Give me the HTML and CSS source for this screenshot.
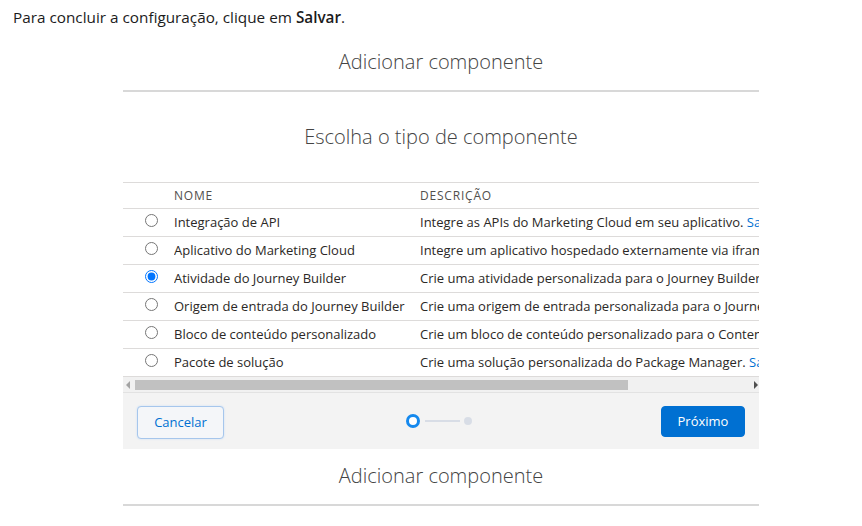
FILE: index.html
```html
<!DOCTYPE html>
<html lang="pt-BR">
<head>
<meta charset="utf-8">
<title>Adicionar componente</title>
<link rel="stylesheet" href="styles.css">
</head>
<body>
<p class="intro">Para concluir a configuração, clique em <b>Salvar</b>.</p>
<div class="panel">
  <h2 class="title">Adicionar componente</h2>
  <h3 class="subtitle">Escolha o tipo de componente</h3>
  <div class="table-wrap">
    <table class="grid">
      <colgroup>
        <col class="col-radio">
        <col class="col-name">
        <col class="col-desc">
      </colgroup>
      <thead>
        <tr><th></th><th>Nome</th><th>Descrição</th></tr>
      </thead>
      <tbody>
        <tr><td class="c-radio"><input type="radio" name="t"></td><td>Integração de API</td><td>Integre as APIs do Marketing Cloud em seu aplicativo. <a href="#">Saiba mais</a></td></tr>
        <tr><td class="c-radio"><input type="radio" name="t"></td><td>Aplicativo do Marketing Cloud</td><td>Integre um aplicativo hospedado externamente via iframe. <a href="#">Saiba mais</a></td></tr>
        <tr><td class="c-radio"><input type="radio" name="t" checked></td><td>Atividade do Journey Builder</td><td>Crie uma atividade personalizada para o Journey Builder. <a href="#">Saiba mais</a></td></tr>
        <tr><td class="c-radio"><input type="radio" name="t"></td><td>Origem de entrada do Journey Builder</td><td>Crie uma origem de entrada personalizada para o Journey Builder. <a href="#">Saiba mais</a></td></tr>
        <tr><td class="c-radio"><input type="radio" name="t"></td><td>Bloco de conteúdo personalizado</td><td>Crie um bloco de conteúdo personalizado para o Content Builder. <a href="#">Saiba mais</a></td></tr>
        <tr><td class="c-radio"><input type="radio" name="t"></td><td>Pacote de solução</td><td>Crie uma solução personalizada do Package Manager. <a href="#">Saiba mais</a></td></tr>
      </tbody>
    </table>
  </div>
  <div class="hscroll">
    <span class="arrow arrow-left"></span>
    <span class="thumb"></span>
    <span class="arrow arrow-right"></span>
  </div>
  <div class="footer">
    <div class="f-left"><button class="btn btn-neutral">Cancelar</button></div>
    <div class="progress">
      <span class="step step-active"></span>
      <span class="step-line"></span>
      <span class="step step-todo"></span>
    </div>
    <div class="f-right"><button class="btn btn-brand">Próximo</button></div>
  </div>
  <h2 class="title title-bottom">Adicionar componente</h2>
</div>
</body>
</html>
```
FILE: styles.css
```css
html, body {
  margin: 0;
  padding: 0;
  background: #ffffff;
}
body {
  font-family: "Open Sans", "Liberation Sans", sans-serif;
  color: #3e3e3c;
}
.intro {
  margin: 0;
  padding: 7px 13px 9px;
  height: 20px;
  font-family: "Open Sans", "Liberation Sans", sans-serif;
  font-size: 15.3px;
  line-height: 20px;
  color: #1b1b1b;
}
.intro b {
  font-weight: 600;
}
.panel {
  margin-left: 123px;
  width: 636px;
}
.title {
  margin: 0;
  padding: 12px 0 14px;
  line-height: 28px;
  font-size: 20px;
  font-weight: 300;
  text-align: center;
  color: #444444;
  border-bottom: 2px solid #d8d8d8;
}
.subtitle {
  margin: 0;
  padding: 31px 0 31px;
  line-height: 28px;
  font-size: 20px;
  font-weight: 300;
  text-align: center;
  color: #444444;
}
.table-wrap {
  width: 636px;
  overflow: hidden;
}
.grid {
  table-layout: fixed;
  width: 900px;
  border-collapse: collapse;
  border-top: 1px solid #dddbda;
  white-space: nowrap;
  font-size: 13px;
  color: #2b2826;
}
.col-radio {
  width: 51px;
}
.col-name {
  width: 246px;
}
.col-desc {
  width: 603px;
}
.grid th {
  height: 25px;
  padding: 0;
  text-align: left;
  font-size: 12px;
  font-weight: 400;
  letter-spacing: 0.8px;
  text-transform: uppercase;
  color: #514f4d;
  border-bottom: 1px solid #dddbda;
}
.grid td {
  height: 25px;
  padding: 0 0 2px;
  overflow: hidden;
  border-bottom: 1px solid #dddbda;
}
.grid td.c-radio {
  text-align: center;
  padding-bottom: 4px;
  height: 23px;
}
.grid td.c-radio input {
  margin: 0 0 0 5px;
  width: 13px;
  height: 13px;
  vertical-align: -1px;
}
.grid a {
  color: #0070d2;
  text-decoration: none;
}
.hscroll {
  display: flex;
  align-items: center;
  height: 15px;
  background: #f1f1f1;
  border-bottom: 1px solid #e2e2e2;
}
.arrow {
  width: 0;
  height: 0;
  border-top: 4px solid transparent;
  border-bottom: 4px solid transparent;
}
.arrow-left {
  margin: 0 5px 0 3px;
  border-right: 4px solid #a3a3a3;
}
.thumb {
  width: 493px;
  height: 10px;
  background: #c1c1c1;
}
.arrow-right {
  margin-left: auto;
  margin-right: 1px;
  border-left: 4px solid #505050;
}
.footer {
  display: grid;
  grid-template-columns: 1fr auto 1fr;
  align-items: center;
  height: 56px;
  padding: 0 14px;
  background: #f3f3f3;
}
.f-right {
  text-align: right;
}
.btn {
  font-family: "Open Sans", "Liberation Sans", sans-serif;
  font-size: 13px;
  border-radius: 4px;
  cursor: pointer;
}
.btn-neutral {
  width: 87px;
  height: 33px;
  margin-top: 2px;
  background: #f4f6f9;
  color: #0070d2;
  border: 1px solid #a6c6ec;
  box-shadow: 0 0 2px #c4dbf5;
}
.btn-brand {
  width: 84px;
  height: 31px;
  background: #0070d2;
  color: #ffffff;
  border: 1px solid #0070d2;
}
.progress {
  display: flex;
  align-items: center;
  margin-right: 4px;
}
.step {
  border-radius: 50%;
  box-sizing: border-box;
}
.step-active {
  width: 14px;
  height: 14px;
  border: 3.5px solid #1589ee;
  background: #ffffff;
}
.step-line {
  width: 35px;
  height: 2px;
  margin: 0 4px 0 5px;
  background: #d8dde6;
}
.step-todo {
  width: 8px;
  height: 8px;
  background: #d8dde6;
}
.title-bottom {
  padding-top: 13px;
  padding-bottom: 14px;
}
```
